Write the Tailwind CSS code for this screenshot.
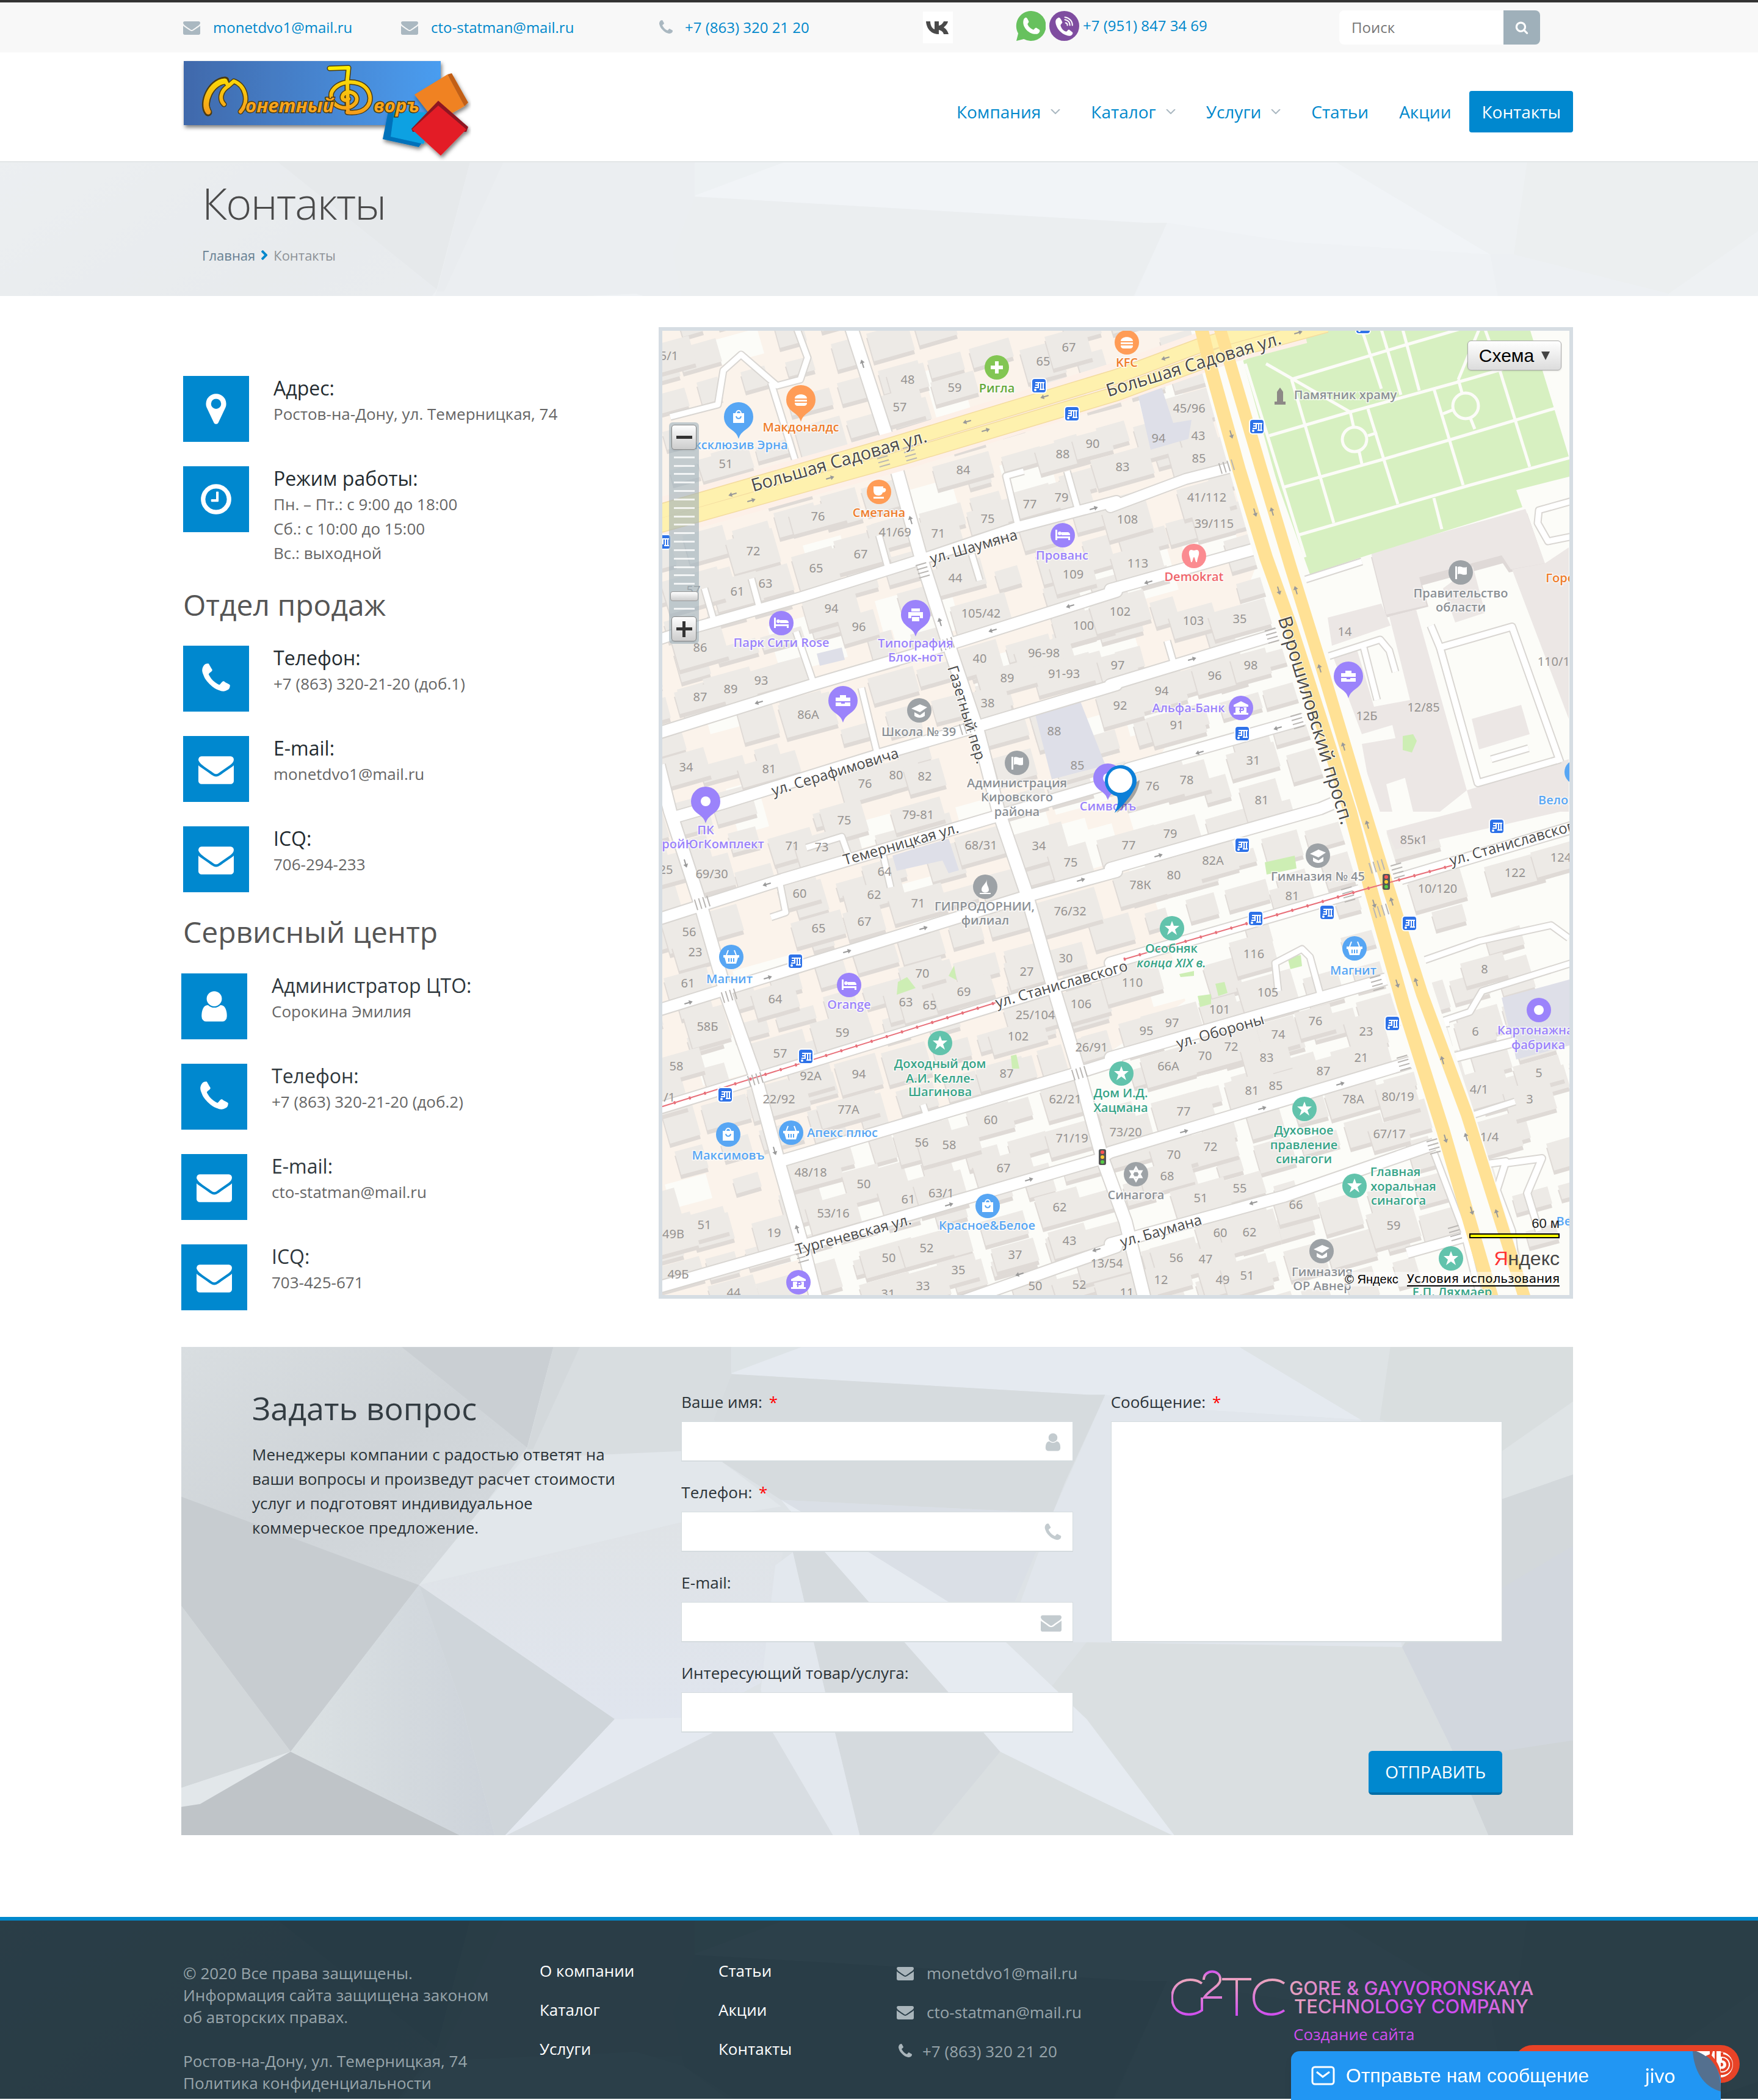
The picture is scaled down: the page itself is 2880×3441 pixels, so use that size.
<!DOCTYPE html>
<html lang="ru">
<head>
<meta charset="utf-8">
<meta name="viewport" content="width=device-width, initial-scale=1">
<title>Контакты — Монетный Дворъ</title>
<script src="https://cdn.jsdelivr.net/npm/@tailwindcss/browser@4"></script>
</head>
<body class="bg-white font-['Open_Sans',sans-serif] text-[26px] leading-[40px] text-[#666]">

<!-- shared icons and background facets -->
<svg class="absolute h-0 w-0" aria-hidden="true">
  <defs>
    <symbol id="i-mail" viewBox="0 0 1792 1792"><path d="M1792 710v794q0 66-47 113t-113 47H160q-66 0-113-47T0 1504V710q44 49 101 87 362 246 497 345 57 42 92.5 65.5t94.5 48 110 24.500h2q51 0 110-24.500t94.500-48T1194 1142q170-123 498-345 57-39 100-87zm0-294q0 79-49 151t-122 123q-376 261-468 325-10 7-42.500 31t-54 38.500-52 32.500-57.500 27-50 9h-2q-23 0-50-9t-57.500-27-52-32.500-54-38.500-42.500-31q-91-64-262-182.500T187 690q-62-42-117-115.500T0 438q0-78 41.500-130T160 256h1472q65 0 112.500 47t47.500 113z"/></symbol>
    <symbol id="i-phone" viewBox="0 0 1792 1792"><path d="M1600 1240q0 27-10 70.500t-21 68.500q-21 50-122 106-94 51-186 51-27 0-53-3.500t-57.500-12.500-47-14.500-55.500-20.500-49-18q-98-35-175-83-127-79-264-216t-216-264q-48-77-83-175-3-9-18-49t-20.500-55.500-14.500-47-12.500-57.500-3.500-53q0-92 51-186 56-101 106-122 25-11 68.500-21t70.500-10q14 0 21 3 18 6 53 76 11 19 30 54t35 63.500 31 53.500q3 4 17.500 25t21.500 35.500 7 28.500q0 20-28.500 50t-62 55-62 53-28.500 46q0 9 5 22.500t8.500 20.500 14 24 11.500 19q76 137 174 235t235 174q2 1 19 11.500t24 14 20.500 8.500 22.500 5q18 0 46-28.500t53-62 55-62 50-28.500q14 0 28.500 7t35.500 21.500 25 17.500q25 15 53.500 31t63.500 35 54 30q70 35 76 53 3 7 3 21z"/></symbol>
    <symbol id="i-user" viewBox="0 0 1792 1792"><path d="M1536 1399q0 109-62.500 187t-150.500 78H469q-88 0-150.500-78T256 1399q0-85 8.500-160.500t31.500-152 58.500-131 94-89T583 832q131 128 313 128t313-128q76 0 134.500 34.500t94 89 58.500 131 31.500 152 8.500 160.500zm-256-887q0 159-112.500 271.500T896 896 624.500 783.500 512 512t112.500-271.500T896 128t271.500 112.500T1280 512z"/></symbol>
    <symbol id="i-clock" viewBox="0 0 1792 1792"><path d="M1024 544v448q0 14-9 23t-23 9H672q-14 0-23-9t-9-23v-64q0-14 9-23t23-9h224V544q0-14 9-23t23-9h64q14 0 23 9t9 23zm416 352q0-148-73-273t-198-198-273-73-273 73-198 198-73 273 73 273 198 198 273 73 273-73 198-198 73-273zm224 0q0 209-103 385.500T1281.500 1561 896 1664t-385.500-103T231 1281.500 128 896t103-385.500T510.500 231 896 128t385.500 103T1561 510.500 1664 896z"/></symbol>
    <symbol id="i-marker" viewBox="0 0 1792 1792"><path d="M1152 640q0-106-75-181t-181-75-181 75-75 181 75 181 181 75 181-75 75-181zm256 0q0 109-33 179l-364 774q-16 33-47.500 52t-67.500 19-67.500-19-46.500-52L417 819q-33-70-33-179 0-212 150-362t362-150 362 150 150 362z"/></symbol>
    <symbol id="i-search" viewBox="0 0 1792 1792"><path d="M1216 832q0-185-131.500-316.500T768 384 451.500 515.500 320 832t131.500 316.500T768 1280t316.500-131.500T1216 832zm512 832q0 52-38 90t-90 38q-54 0-90-38l-343-342q-179 124-399 124-143 0-273.500-55.500t-225-150-150-225T64 832t55.500-273.500 150-225 225-150T768 128t273.500 55.500 225 150 150 225T1472 832q0 220-124 399l343 343q37 37 37 90z"/></symbol>
    <linearGradient id="f1" x1="0" y1="0" x2="1" y2="1"><stop offset="0" stop-color="#d9dee1"/><stop offset=".5" stop-color="#cfd4d8"/><stop offset="1" stop-color="#d6dbdf"/></linearGradient>
    <linearGradient id="f2" x1="0" y1="0" x2="1" y2="0"><stop offset="0" stop-color="#dbe1e3"/><stop offset="1" stop-color="#cdd3da"/></linearGradient>
    <linearGradient id="f3" x1="0" y1="0" x2="0" y2="1"><stop offset="0" stop-color="#dfe3e6"/><stop offset="1" stop-color="#e0e5ee"/></linearGradient>
    <g id="facets" transform="matrix(.9567 0 0 .5357 -17 -17)">
      <path fill="#dde2e6" d="M0 0h2450v1900H0z"/>
      <path fill="url(#f1)" d="M10 32H395L610 340 530 530 425 760 10 490z"/>
      <path fill="#c7ccd0" d="M10 485L425 760 205 1270 10 805z"/>
      <path fill="#d2d7da" d="M10 805L205 1270 10 1385z"/>
      <path fill="#e2e7ea" d="M10 1385L205 1270 50 1430 10 1441z"/>
      <path fill="#bfc4c8" d="M10 1441L50 1430 205 1270 500 1530H10z"/>
      <path fill="url(#f2)" d="M205 1270L425 760 500 1140 555 1530H500z"/>
      <path fill="#cfd5da" d="M425 760L760 1170 570 1530H555L500 1140z"/>
      <path fill="#cacfd3" d="M395 32H655L610 340z"/>
      <path fill="#d8dde0" d="M655 32H960V115L930 250 945 360 605 372 610 340z"/>
      <path fill="#d3d8db" d="M655 32H700L620 345H610z"/>
      <path fill="#e2e7eb" d="M605 372L880 350 945 385 1045 520 870 570 425 760 530 530z"/>
      <path fill="url(#f3)" d="M425 760L870 570 1060 530 1010 1060 900 1165 760 1170z"/>
      <path fill="#e5eaf0" d="M960 32H1830L2038 255 1770 225 1568 178 960 115z"/>
      <path fill="#dde3e6" d="M960 32H1080L960 112z"/>
      <path fill="#d6dbde" d="M960 115L1568 178H1600L1530 450 1510 540 1045 500 945 385 930 250z"/>
      <path fill="#dadfe6" d="M1045 500L1510 540 1445 810H1330z"/>
      <path fill="#e1e6ec" d="M1600 178L1770 225 2038 255 2108 950 1568 935 1430 935 1510 540z"/>
      <path fill="#dee3e5" d="M1830 32H2088L2070 255H2038z"/>
      <path fill="#d9dedf" d="M2088 32H2420V175L2280 350 2070 255z"/>
      <path fill="#dfe4e6" d="M2420 175V410L2275 500 2280 350z"/>
      <path fill="#d3d8db" d="M2420 410V640L2108 950 2275 500z"/>
      <path fill="#d2d7de" d="M2108 950L2420 620V1530H2257L2190 1250z"/>
      <path fill="#cfd4d7" d="M2200 1290L2420 1230V1530H2257z"/>
      <path fill="#dadfe1" d="M1568 935L2108 950 2190 1250 2257 1530H1300L1420 1270z"/>
      <path fill="#d5dade" d="M1060 530L1125 660 1330 1085 1420 1270 1300 1530H1180L1120 1085 1065 660z"/>
      <path fill="#e6ebf1" d="M1045 500L1195 660 1330 810 1430 935 1568 1170 1720 1530 1568 1400 1420 1270 1330 1085 1120 660z"/>
      <path fill="#e3e8ee" d="M1065 660L1035 700 1010 1080 1030 1210 1135 1530H1180L1120 1085z"/>
      <path fill="#e4e9f0" d="M760 1170L900 1165 930 1210 570 1530z"/>
      <path fill="#d8dde2" d="M930 1210H1030L1135 1530H570z"/>
    </g>
  </defs>
</svg>

<!-- contact strip -->
<div class="border-t-4 border-[#333] bg-[#f8f8f8] pr-[6px] text-[24px] leading-[36px]">
  <div class="mx-auto grid h-[82px] w-full max-w-[2280px] grid-cols-[357fr_420fr_435fr_152fr_530fr_329fr] items-center pl-[3px] pr-[54px] text-[#0088cc]">
    <a href="mailto:monetdvo1@mail.ru" class="flex items-center gap-[21px]"><svg class="size-7 fill-[#aab8c1]"><use href="#i-mail"/></svg>monetdvo1@mail.ru</a>
    <a href="mailto:cto-statman@mail.ru" class="flex items-center gap-[21px]"><svg class="size-7 fill-[#aab8c1]"><use href="#i-mail"/></svg>cto-statman@mail.ru</a>
    <a href="tel:+78633202120" class="flex items-center gap-[17px]"><svg class="size-7 fill-[#aab8c1]"><use href="#i-phone"/></svg>+7 (863) 320 21 20</a>
    <a href="#vk" aria-label="ВКонтакте" class="flex h-[52px] w-[49px] items-center justify-center bg-white">
      <svg class="h-[22px] w-[40px]" viewBox="0 0 40 22"><path fill="#4a4a4a" d="M21 22C9 22 1 14 0 1h7c0 8 4 12 7 13V1h7v7c3 0 7-4 8-7h7c-1 5-5 8-7 10 2 1 6 4 8 11h-8c-1-4-4-6-8-7v7z"/></svg>
    </a>
    <div class="flex items-center gap-[6px] pb-[6px]">
      <svg class="size-[49px] shrink-0" viewBox="0 0 48 48"><path fill="#67c15e" d="M24 0a24 24 0 1 1-11 45L1 48l3-12A24 24 0 0 1 24 0z"/><path fill="#fff" d="M15 11c2-1 3 0 4 2l2 4c0 2-2 3-2 4 1 4 5 7 9 9 2 0 3-4 5-3l5 3c2 2-1 7-5 7-10 1-21-9-21-19 0-3 1-6 3-7z"/></svg>
      <svg class="size-[49px] shrink-0" viewBox="0 0 48 48"><circle cx="24" cy="24" r="24" fill="#7f4da0"/><path fill="#fff" d="M14 11c2-1 3 0 5 3l2 4c0 2-3 3-3 5 1 5 5 9 9 10 2 0 3-4 5-3l5 4c2 2-1 6-5 6C20 39 10 27 10 17c0-3 2-5 4-6z"/><path fill="none" stroke="#fff" stroke-width="2" stroke-linecap="round" d="M25 10c7 1 12 6 12 13M25 14c5 1 8 4 8 9M26 19c2 0 3 1 3 4"/></svg>
      <a href="tel:+79518473469">+7 (951) 847 34 69</a>
    </div>
    <form class="flex h-14 overflow-hidden rounded-[8px]">
      <input type="search" aria-label="Поиск" placeholder="Поиск" class="min-w-0 flex-1 bg-white px-5 text-[#777] placeholder:text-[#777] outline-none">
      <button type="button" aria-label="Найти" class="flex w-[60px] items-center justify-center bg-[#9fb0ba]"><svg class="size-[22px] fill-white"><use href="#i-search"/></svg></button>
    </form>
  </div>
</div>

<!-- header -->
<header class="border-b-2 border-[#e2e6e7] bg-white pr-[6px]">
  <div class="mx-auto flex h-[178px] w-full max-w-[2280px] items-start justify-between">
    <a href="#home" aria-label="Монетный Дворъ" class="block pt-[12px]">
      <svg class="h-[166px] w-[475px]" viewBox="297 98 475 166">
        <defs>
          <linearGradient id="lg" x1="0" x2="1"><stop offset="0" stop-color="#4169ab"/><stop offset="1" stop-color="#4a9df0"/></linearGradient>
          <linearGradient id="gold" gradientUnits="userSpaceOnUse" x1="0" y1="108" x2="0" y2="188"><stop offset="0" stop-color="#fdf000"/><stop offset="1" stop-color="#f59b1c"/></linearGradient>
          <filter id="sh" x="-10%" y="-10%" width="130%" height="130%"><feDropShadow dx="2" dy="4" stdDeviation="3" flood-opacity=".5"/></filter>
        </defs>
        <path fill="url(#lg)" filter="url(#sh)" d="M301 100H722V205H301z"/>
        <g filter="url(#sh)">
          <path fill="#0271ba" d="M636 182l-9 46 59 13 34-46z"/><path fill="#0aa1e2" d="M646 180l-6 44 54 12 20-50z"/>
          <path fill="#f08220" d="M679 155l54-33 28 52-47 26z"/><path fill="#c25f14" d="M733 122l7-2 27 48-6 6z"/>
          <path fill="#8e1720" d="M718 165l49 43-3 8-88 0-2-5z"/><path fill="#e31e26" d="M718 173l46 39-42 43-47-43z"/>
        </g>
        <g fill="none" stroke-linecap="round" stroke-linejoin="round">
          <g stroke="#4b3b12"><path stroke-width="13" d="M341 184c-11-14 4-50 28-52"/><path stroke-width="9" d="M341 180c-8-16 6-46 28-48l5 9 9-8c18 6 27 32 11 50M374 141c-13 8-15 22-7 30M540 112l31-1-2 20M569 130v54M569 184c34 4 45-20 32-38-14-18-50-14-58 6-5 22 26 34 40 16 8-16-18-24-22-10-1 6 6 8 10 4"/></g>
          <g stroke="url(#gold)"><path stroke-width="9" d="M341 183c-10-14 4-48 27-50"/><path stroke-width="6" d="M341 180c-8-16 6-46 28-48l5 9 9-8c18 6 27 32 11 50M374 141c-13 8-15 22-7 30M540 112l31-1-2 20M569 130l1 54M569 184c34 4 45-20 32-38-14-18-50-14-58 6-5 22 26 34 40 16 8-16-18-24-22-10-1 6 6 8 10 4"/></g>
        </g>
        <g font-family="Open Sans, sans-serif" font-weight="700" font-size="31" font-style="italic" fill="#f8a51c" stroke="#4b3b12" stroke-width="3" paint-order="stroke">
          <text x="402" y="184">онетный</text><text x="612" y="184">воръ</text>
        </g>
      </svg>
    </a>
    <nav class="mt-[63px] flex items-center gap-[10px] text-[28px] leading-[68px] text-[#0088cc]">
      <a href="#company" class="flex items-center gap-4 px-5">Компания<svg class="h-2 w-4 fill-none stroke-[#aab8c1] stroke-2" viewBox="0 0 16 8"><path d="M1 0l7 7 7-7"/></svg></a>
      <a href="#catalog" class="flex items-center gap-4 px-5">Каталог<svg class="h-2 w-4 fill-none stroke-[#aab8c1] stroke-2" viewBox="0 0 16 8"><path d="M1 0l7 7 7-7"/></svg></a>
      <a href="#services" class="flex items-center gap-4 px-5">Услуги<svg class="h-2 w-4 fill-none stroke-[#aab8c1] stroke-2" viewBox="0 0 16 8"><path d="M1 0l7 7 7-7"/></svg></a>
      <a href="#articles" class="px-5">Статьи</a>
      <a href="#offers" class="px-5">Акции</a>
      <a href="#contacts" aria-current="page" class="rounded-[4px] bg-[#0088cf] px-5 text-white">Контакты</a>
    </nav>
  </div>
</header>

<!-- page title -->
<section class="relative bg-[#e9edef] pr-[6px]">
  <svg class="absolute inset-0 size-full" viewBox="0 0 2280 800" preserveAspectRatio="xMinYMin slice" aria-hidden="true"><use href="#facets"/></svg>
  <div class="absolute inset-0 bg-[#f8fafb]/60"></div>
  <div class="relative mx-auto h-[219px] w-full max-w-[2280px] px-[34px] pt-4">
    <h1 class="text-[72px] leading-[100px] font-light tracking-tight text-[#4a4a4a]">Контакты</h1>
    <nav aria-label="Навигация" class="mt-5 flex items-center gap-[10px] text-[22px] leading-8">
      <a href="#home" class="text-[#667f92]">Главная</a>
      <svg class="h-4 w-[10px] fill-none stroke-[#0088cc] stroke-4" viewBox="0 0 10 16"><path d="M1 1l7 7-7 7"/></svg>
      <span class="text-[#8d9297]">Контакты</span>
    </nav>
  </div>
</section>

<main id="contacts" class="pr-[6px]">
  <div class="mx-auto w-full max-w-[2280px]">
    <div class="flex items-start pt-[51px]">
      <!-- contact details -->
      <div class="w-[782px] shrink-0 pt-20">
        <div class="flex flex-col gap-10 pl-[3px]">
          <div class="flex gap-10"><span class="flex size-[108px] shrink-0 items-center justify-center bg-[#0088cf]"><svg class="size-[58px] fill-white"><use href="#i-marker"/></svg></span><div><h4 class="mb-[2px] text-[32px] text-[#232b30]">Адрес:</h4><p>Ростов-на-Дону, ул. Темерницкая, 74</p></div></div>
          <div class="flex gap-10"><span class="flex size-[108px] shrink-0 items-center justify-center bg-[#0088cf]"><svg class="size-[58px] fill-white"><use href="#i-clock"/></svg></span><div><h4 class="mb-[2px] text-[32px] text-[#232b30]">Режим работы:</h4><p>Пн. – Пт.: с 9:00 до 18:00<br>Сб.: с 10:00 до 15:00<br>Вс.: выходной</p></div></div>
        </div>
        <h3 class="mt-[33px] mb-[35px] pl-[3px] text-[48px] leading-[64px] text-[#555]">Отдел продаж</h3>
        <div class="flex flex-col gap-10 pl-[3px]">
          <div class="flex gap-10"><span class="flex size-[108px] shrink-0 items-center justify-center bg-[#0088cf]"><svg class="size-[58px] fill-white"><use href="#i-phone"/></svg></span><div><h4 class="mb-[2px] text-[32px] text-[#232b30]">Телефон:</h4><p>+7 (863) 320-21-20 (доб.1)</p></div></div>
          <div class="flex gap-10"><span class="flex size-[108px] shrink-0 items-center justify-center bg-[#0088cf]"><svg class="size-[58px] fill-white"><use href="#i-mail"/></svg></span><div><h4 class="mb-[2px] text-[32px] text-[#232b30]">E-mail:</h4><p>monetdvo1@mail.ru</p></div></div>
          <div class="flex gap-10"><span class="flex size-[108px] shrink-0 items-center justify-center bg-[#0088cf]"><svg class="size-[58px] fill-white"><use href="#i-mail"/></svg></span><div><h4 class="mb-[2px] text-[32px] text-[#232b30]">ICQ:</h4><p>706-294-233</p></div></div>
        </div>
        <h3 class="mt-[33px] mb-[36px] pl-[3px] text-[48px] leading-[64px] text-[#555]">Сервисный центр</h3>
        <div class="flex flex-col gap-10">
          <div class="flex gap-10"><span class="flex size-[108px] shrink-0 items-center justify-center bg-[#0088cf]"><svg class="size-[58px] fill-white"><use href="#i-user"/></svg></span><div><h4 class="mb-[2px] text-[32px] text-[#2f383d]">Администратор ЦТО:</h4><p>Сорокина Эмилия</p></div></div>
          <div class="flex gap-10"><span class="flex size-[108px] shrink-0 items-center justify-center bg-[#0088cf]"><svg class="size-[58px] fill-white"><use href="#i-phone"/></svg></span><div><h4 class="mb-[2px] text-[32px] text-[#2f383d]">Телефон:</h4><p>+7 (863) 320-21-20 (доб.2)</p></div></div>
          <div class="flex gap-10"><span class="flex size-[108px] shrink-0 items-center justify-center bg-[#0088cf]"><svg class="size-[58px] fill-white"><use href="#i-mail"/></svg></span><div><h4 class="mb-[2px] text-[32px] text-[#2f383d]">E-mail:</h4><p>cto-statman@mail.ru</p></div></div>
          <div class="flex gap-10"><span class="flex size-[108px] shrink-0 items-center justify-center bg-[#0088cf]"><svg class="size-[58px] fill-white"><use href="#i-mail"/></svg></span><div><h4 class="mb-[2px] text-[32px] text-[#2f383d]">ICQ:</h4><p>703-425-671</p></div></div>
        </div>
      </div>

      <!-- map -->
      <div class="relative h-[1592px] min-w-0 flex-1 overflow-hidden border-[6px] border-[#d6dde3] bg-[#fbf9f5]">
        <svg id="map" class="size-full" viewBox="1086 542 1486 1580" preserveAspectRatio="xMinYMin slice" role="img" aria-label="Карта проезда"></svg>

        <div class="absolute top-[150px] left-[11px] flex h-[363px] w-[49px] flex-col items-center justify-between rounded-[6px] bg-[#9fb0ba]/60 p-1">
          <button type="button" aria-label="Отдалить" class="flex size-[41px] items-center justify-center rounded-[5px] border border-[#8a8a8a] bg-linear-to-b from-white to-[#ccc] shadow"><span class="h-[5px] w-[26px] bg-[#333]"></span></button>
          <div class="relative flex flex-1 flex-col items-center justify-evenly">
            <i class="h-[3px] w-[34px] bg-white/80"></i><i class="h-[3px] w-[34px] bg-white/80"></i><i class="h-[3px] w-[34px] bg-white/80"></i><i class="h-[3px] w-[34px] bg-white/80"></i><i class="h-[3px] w-[34px] bg-white/80"></i><i class="h-[3px] w-[34px] bg-white/80"></i><i class="h-[3px] w-[34px] bg-white/80"></i><i class="h-[3px] w-[34px] bg-white/80"></i><i class="h-[3px] w-[34px] bg-white/80"></i><i class="h-[3px] w-[34px] bg-white/80"></i><i class="h-[3px] w-[34px] bg-white/80"></i><i class="h-[3px] w-[34px] bg-white/80"></i><i class="h-[3px] w-[34px] bg-white/80"></i><i class="h-[3px] w-[34px] bg-white/80"></i><i class="h-[3px] w-[34px] bg-white/80"></i><i class="h-[3px] w-[34px] bg-white/80"></i>
            <i class="h-[16px] w-[46px] rounded-[4px] border border-[#999] bg-linear-to-b from-white to-[#ccc]"></i>
            <i class="h-[3px] w-[34px] bg-white/80"></i>
            <input type="range" aria-label="Масштаб" min="0" max="17" value="16" class="absolute inset-0 size-full opacity-0">
          </div>
          <button type="button" aria-label="Приблизить" class="relative flex size-[41px] items-center justify-center rounded-[5px] border border-[#8a8a8a] bg-linear-to-b from-white to-[#ccc] shadow"><span class="h-[5px] w-[26px] bg-[#333]"></span><span class="absolute h-[26px] w-[5px] bg-[#333]"></span></button>
        </div>

        <button type="button" class="absolute top-[16px] right-[13px] flex h-[49px] w-[154px] items-center justify-center gap-3 rounded-[6px] border border-[#aaa] bg-linear-to-b from-white to-[#dcdcdc] font-['Liberation_Sans',sans-serif] text-[30px] leading-none text-black shadow">Схема<svg class="size-[14px] fill-[#444]" viewBox="0 0 14 14"><path d="M0 0h14L7 14z"/></svg></button>

        <div class="absolute right-[16px] bottom-[14px] flex flex-col items-end font-['Liberation_Sans',sans-serif] text-[20px] leading-6 text-black">
          <span class="text-[22px] text-[#222]">60 м</span>
          <span class="mt-[4px] h-[8px] w-[148px] border-2 border-black bg-[#ffff00]"></span>
          <span class="mt-[15px] text-[32px] leading-[36px] text-[#444]"><span class="text-[#f33]">Я</span>ндекс</span>
          <span class="mt-[4px] flex gap-[14px] bg-white/50"><span>© Яндекс</span><a href="#terms" class="border-b-2 border-black font-['DejaVu_Sans',sans-serif] text-[20px] leading-[22px]">Условия использования</a></span>
        </div>
      </div>
    </div>

    <!-- question form -->
    <section class="relative mt-[60px] bg-[#dde2e6] text-[#2b3338]">
      <svg class="absolute inset-0 size-full" viewBox="0 0 2280 800" preserveAspectRatio="xMinYMin slice" aria-hidden="true"><use href="#facets"/></svg>
      <form class="relative grid grid-cols-3 gap-x-[62px] px-[116px] pt-[70px] pb-[66px]">
        <div>
          <h2 class="-mt-[2px] text-[52px] leading-[64px] text-[#333c42]">Задать вопрос</h2>
          <p class="mt-6 max-w-[600px]">Менеджеры компании с радостью ответят на ваши вопросы и произведут расчет стоимости услуг и подготовят индивидуальное коммерческое предложение.</p>
        </div>
        <div class="flex flex-col gap-[30px]">
          <div class="relative">
            <label for="name" class="mb-3 block">Ваше имя: <span class="ml-1 text-[#f00]">*</span></label>
            <input id="name" type="text" class="block h-[66px] w-full border border-b-2 border-[#d5dcdf] bg-white pr-16 pl-4 outline-none">
            <svg class="absolute right-4 bottom-[15px] size-[34px] fill-[#c3cbcf]"><use href="#i-user"/></svg>
          </div>
          <div class="relative">
            <label for="tel" class="mb-3 block">Телефон: <span class="ml-1 text-[#f00]">*</span></label>
            <input id="tel" type="tel" class="block h-[66px] w-full border border-b-2 border-[#d5dcdf] bg-white pr-16 pl-4 outline-none">
            <svg class="absolute right-4 bottom-[15px] size-[34px] fill-[#c3cbcf]"><use href="#i-phone"/></svg>
          </div>
          <div class="relative">
            <label for="email" class="mb-3 block">E-mail:</label>
            <input id="email" type="email" class="block h-[66px] w-full border border-b-2 border-[#d5dcdf] bg-white pr-16 pl-4 outline-none">
            <svg class="absolute right-[19px] bottom-[15px] size-[34px] fill-[#c3cbcf]"><use href="#i-mail"/></svg>
          </div>
          <div>
            <label for="item" class="mb-3 block">Интересующий товар/услуга:</label>
            <input id="item" type="text" class="block h-[66px] w-full border border-b-2 border-[#d5dcdf] bg-white px-4 outline-none">
          </div>
        </div>
        <div class="flex flex-col">
          <label for="msg" class="mb-3 block">Сообщение: <span class="ml-1 text-[#f00]">*</span></label>
          <textarea id="msg" class="block h-[362px] w-full resize-none border border-b-2 border-[#d5dcdf] bg-white p-4 outline-none"></textarea>
        </div>
        <button type="submit" class="col-start-3 mt-[30px] h-[72px] justify-self-end rounded-[6px] border-b-4 border-[#006da6] bg-[#0088cf] px-[27px] text-[28px] text-white">ОТПРАВИТЬ</button>
      </form>
    </section>
  </div>
</main>

<footer class="relative mt-[134px] border-t-6 border-[#0088cc] bg-[#263a44] pr-[6px] text-[#98a5ab]">
  <svg class="absolute inset-0 size-full" viewBox="0 0 2280 800" preserveAspectRatio="xMinYMin slice" aria-hidden="true"><use href="#facets"/></svg>
  <div class="absolute inset-0 bg-[#061d28]/83"></div>
  <div class="relative mx-auto grid w-full max-w-[2280px] grid-cols-[584fr_293fr_292fr_450fr_658fr] pt-[68px] pb-2 pl-[3px]">
    <p class="leading-9">© 2020 Все права защищены.<br>Информация сайта защищена законом<br>об авторских правах.<br><br>Ростов-на-Дону, ул. Темерницкая, 74<br><a href="#privacy">Политика конфиденциальности</a></p>
    <nav class="-mt-[6px] flex flex-col gap-6 text-white"><a href="#about">О компании</a><a href="#catalog">Каталог</a><a href="#services">Услуги</a></nav>
    <nav class="-mt-[6px] flex flex-col gap-6 text-white"><a href="#articles">Статьи</a><a href="#offers">Акции</a><a href="#contacts">Контакты</a></nav>
    <div class="-mt-[2px] flex flex-col gap-6">
      <a href="mailto:monetdvo1@mail.ru" class="flex items-center gap-[21px]"><svg class="size-7 fill-[#a9b5bb]"><use href="#i-mail"/></svg>monetdvo1@mail.ru</a>
      <a href="mailto:cto-statman@mail.ru" class="flex items-center gap-[21px]"><svg class="size-7 fill-[#a9b5bb]"><use href="#i-mail"/></svg>cto-statman@mail.ru</a>
      <a href="tel:+78633202120" class="flex items-center gap-[14px]"><svg class="size-7 fill-[#a9b5bb]"><use href="#i-phone"/></svg>+7 (863) 320 21 20</a>
    </div>
    <a href="#studio" class="block pt-3 text-[#cf4df0]">
      <svg class="h-[80px] w-[610px]" viewBox="1920 3226 610 80">
        <defs>
          <linearGradient id="pk" x1="0" x2="1"><stop offset="0" stop-color="#e6a3bd"/><stop offset=".45" stop-color="#cf4df0"/><stop offset=".75" stop-color="#cf4df0"/><stop offset="1" stop-color="#dc86cf"/></linearGradient>
          <linearGradient id="pv" gradientUnits="userSpaceOnUse" x1="0" y1="3228" x2="0" y2="3302"><stop offset="0" stop-color="#cf4df0"/><stop offset=".2" stop-color="#eba5bd"/><stop offset="1" stop-color="#cf4df0"/></linearGradient>
        </defs>
        <g fill="none" stroke="url(#pv)" stroke-width="4"><path d="M1970 3249c-17-13-49-5-49 23 0 29 31 34 49 21v-21"/><path d="M1973 3243c0-18 28-18 27 0 0 10-20 18-26 29h29M2003 3242h48M2027 3242v60M2105 3249c-18-13-50-5-50 23 0 29 32 34 50 21"/></g>
        <g font-family="Inter, sans-serif" font-size="31" font-weight="500" fill="url(#pk)"><text x="2113" y="3268">GORE &amp; GAYVORONSKAYA</text><text x="2121" y="3298">TECHNOLOGY COMPANY</text></g>
      </svg>
      <span class="block pt-[6px] pl-[200px]">Создание сайта</span>
    </a>
  </div>
</footer>

<!-- chat and callback widgets -->
<div class="fixed right-[30px] bottom-[28px] h-[62px] w-[370px] rounded-full bg-[#e84327]">
  <svg class="absolute top-[10px] right-[10px] size-[44px]" viewBox="0 0 44 44"><circle cx="22" cy="22" r="21" fill="#fff"/><path fill="none" stroke="#e84327" stroke-width="4" d="M16 2v20a9 9 0 1 0 9-9M25 2v5a15 15 0 1 1-13 22"/><circle cx="24" cy="22" r="3" fill="#e84327"/></svg>
</div>
<button type="button" class="fixed right-[61px] bottom-0 flex h-[80px] w-[704px] items-center overflow-hidden rounded-tl-[14px] bg-[#2196f3] px-[33px] text-left font-['Liberation_Sans',sans-serif] text-[32px] leading-[40px] text-white shadow-lg">
  <svg class="h-[32px] w-[39px] shrink-0 fill-none stroke-white stroke-3" viewBox="0 0 39 32"><rect x="2" y="2" width="35" height="28" rx="4"/><path d="M9 10l10 8 11-8"/></svg>
  <span class="ml-[18px]">Отправьте нам сообщение</span>
  <span class="absolute top-[20px] left-[580px] font-['Lato',sans-serif] text-[32px]">jivo</span>
  <svg class="absolute top-0 right-0 h-[68px] w-[46px]" viewBox="0 0 46 68"><path fill="#54708f" d="M0 0h8c26 8 38 30 38 66C16 58 2 30 0 0z"/><path fill="#e84327" d="M8 0h38v46C40 22 28 8 8 0z"/><path fill="#fff" d="M6 0h22v5l-7 3C17 5 12 2 6 0zM33 0h3v13l-5-6zM39 0h7v36c-1-8-4-14-7-19z"/></svg>
</button>

<script>
// The map is surveyed on four sheets; each has its own origin and scale.
const sheets = {A: [1070, 530, .48469, .5102], B: [1820, 530, .49107, .5102], C: [1070, 1330, .48469, .51658], D: [1820, 1330, .49107, .51658]};
const at = (s, u, v) => { const [x, y, a, b] = sheets[s]; return [Math.round(x + u * a), Math.round(y + v * b)]; };
// "A 30 650 120 600 B 0 150" -> list of points
const pts = str => { let s = 'A', out = [], q = []; for (const t of str.split(' ')) { if (sheets[t]) s = t; else { q.push(+t); if (q.length === 2) { out.push(at(s, ...q)); q = []; } } } return out; };
const line = str => 'M' + pts(str).map(p => p.join(' ')).join('L');
let seed = 7; const rnd = () => (seed = (seed * 16807) % 2147483647) / 2147483647;
let out = '';

// ground
out += '<path fill="#fcfcf8" d="M1080 536H2580V2130H1080z"/>';
out += `<path fill="#fbf3eb" d="${line('A 30 20 B 300 0 500 740 B 400 1000 60 1568 D 250 600 0 760 C 1400 840 430 1100 560 1568 C 20 1568')}z"/>`;
for (let i = 0; i < 46; i++) { const x = 1090 + rnd() * 850, y = 560 + rnd() * 1500, w = 50 + rnd() * 60, h = 30 + rnd() * 50; out += `<path fill="#fcfcf8" d="M${x | 0} ${y | 0}l${w | 0} ${-w * .28 | 0} ${h * .29 | 0} ${h | 0} ${-w | 0} ${w * .28 | 0}z"/>`; }

// buildings
const box = (x, y, w, h) => { const p = (a, b, o) => `${Math.round(x + a * .963 + b * .28)} ${Math.round(y - a * .27 + b * .96 + o)}`;
  const f = o => `M${p(-w / 2, -h / 2, o)}L${p(w / 2, -h / 2, o)}L${p(w / 2, h / 2, o)}L${p(-w / 2, h / 2, o)}z`;
  return `<path fill="#dfdad6" d="${f(7)}"/><path fill="#edeae6" d="${f(0)}"/>`; };
const avenue = y => 1975 + (y - 541) * .29 + (y > 1400 ? (y - 1400) * .04 : 0);
for (let j = -2; j < 30; j++) for (let i = -6; i < 24; i++) {
  const x = 1090 + i * 74 + j * 17, y = 660 + j * 58 - i * 20, w = 34 + rnd() * 44, h = 22 + rnd() * 34, k = rnd();
  if (x > avenue(y) - 20 && y < 1500) continue;
  if (k < .78) out += box(x, y, w, h);
}

const houses = {
A: '51 248 450 48 863 180 59 1021 206 57 836 268 65 1321 122 67 1407 76 5/1 55 103 76 559 619 84 1050 470 88 1387 419 90 1487 387 79 1383 558 77 1276 580 75 1133 628 71 965 674 41/69 820 670 67 704 740 72 340 731 65 552 786 63 381 834 61 287 860 57 139 857 109 1422 806 44 1024 817 105/42 1111 931 100 1456 970 94 605 915 96 697 974 86 160 1040 93 367 1147 89 265 1175 87 160 1200 86А 526 1256 40 1106 1077 96-98 1322 1059 91-93 1390 1126 89 1199 1138 38 1133 1220 88 1357 1310 85 1437 1420 81 395 1430 34 113 1424 80 824 1451 82 921 1454 76 719 1478',
B: '45/96 262 273 94 160 368 43 293 360 85 296 433 83 40 460 41/112 322 558 39/115 346 642 108 58 629 113 92 770 102 33 925 103 276 955 35 432 949 97 25 1098 96 349 1131 98 469 1097 94 172 1180 92 33 1227 91 221 1290 31 476 1403 78 255 1467 76 140 1485 81 505 1530 14 782 989 12Б 855 1261 12/85 1044 1232 110/15 1490 1086',
C: '75 648 27 79-81 898 10 71 473 108 73 572 113 25 45 184 69/30 201 197 68/31 1111 106 34 1306 108 75 1413 161 64 785 189 60 498 260 62 749 263 71 898 290 67 715 349 65 561 369 56 123 382 23 144 445 61 120 544 64 415 594 70 911 513 63 857 604 65 937 613 69 1053 572 27 1265 508 30 1396 465 76/32 1412 316 106 1449 610 25/104 1293 645 102 1235 712 26/91 1484 748 58Б 185 681 58 80 808 57 431 766 59 641 700 92А 534 838 94 697 832 87 1196 831 1/1 45 905 22/92 428 911 77А 662 944 60 1142 977 62/21 1395 912 56 910 1050 58 1003 1056 71/19 1418 1035 48/18 535 1145 50 714 1180 67 1186 1130 61 865 1230 63/1 975 1210 53/16 611 1273 51 176 1310 49В 70 1339 19 410 1336 62 1377 1254 50 798 1415 52 926 1384 43 1410 1360 37 1225 1405 35 1033 1454 33 915 1505 50 1294 1505 52 1442 1500 13/54 1535 1433 49Б 87 1467 44 275 1525 31 797 1530',
D: '79 200 70 77 62 106 82А 342 155 80 211 202 78К 100 233 81 606 268 85к1 1013 90 122 1350 194 124 1503 145 10/120 1092 244 116 478 451 110 73 542 105 525 573 101 364 627 97 205 669 95 121 695 76 685 664 74 559 707 72 404 745 70 315 774 66А 193 807 23 854 697 21 836 781 83 521 780 87 711 822 85 552 869 81 472 884 78А 811 912 80/19 959 904 77 245 950 73/20 50 1016 67/17 931 1023 72 334 1062 70 212 1088 68 190 1156 8 1248 500 6 1217 696 5 1430 828 4/1 1230 880 3 1398 911 1/4 1264 1031 55 432 1194 51 302 1226 66 619 1246 59 944 1312 60 366 1335 62 464 1333 56 219 1415 47 318 1418 12 170 1484 49 374 1484 51 457 1471 11 55 1525'
};
const numbers = [];
for (const s in houses) { const t = houses[s].split(' '); for (let i = 0; i < t.length; i += 3) numbers.push([t[i], ...at(s, +t[i + 1], +t[i + 2])]); }
for (const [, x, y] of numbers) if (!(x > avenue(y) && y < 1330)) out += box(x, y, 60 + rnd() * 40, 36 + rnd() * 22);

// large blocks
const area = (fill, str) => `<path fill="${fill}" d="${line(str)}z"/>`;
out += area('#dedfe8', 'A 1290 1240 1440 1200 1530 1420 1350 1465') + area('#dedfe8', 'B 90 220 170 200 210 320 270 310 260 370 135 405') + area('#dedfe8', 'C 810 140 1000 85 1035 185 1000 195 980 155 825 188') + area('#dedfe8', 'D 1305 590 1540 530 1540 740 1355 785') + area('#dedfe8', 'A 555 1060 640 1040 650 1080 565 1100');
out += area('#dfd9d7', 'B 870 750 1390 610 1450 775 1330 800 1310 770 1040 840 1060 910 920 945') + area('#ece7e5', 'B 870 735 1385 595 1450 770 1335 790 1305 745 1030 815 1055 905 920 935');
out += area('#ece7e5', 'B 725 945 905 900 935 970 740 1035') + area('#ece7e5', 'B 930 940 1020 920 1190 1500 1100 1568 1010 1568 940 1290 840 1320 740 1060 820 1040 880 1230 1000 1210') + area('#ece7e5', 'B 1340 790 1450 770 1530 720 1530 1270') + area('#ece7e5', 'B 1205 1270 1370 1225 1398 1320 1230 1368') + area('#ece7e5', 'B 1110 850 1210 780 1250 930 1150 960') + area('#ece7e5', 'B 840 1350 960 1330 1010 1450 920 1480 940 1568 880 1568') + area('#ece7e5', 'B 1190 1500 1530 1400 1530 1568 1210 1568') + area('#ece7e5', 'D 920 60 1400 -60 1480 -50 1500 0 950 120');

// parks
out += area('#d7f0c1', 'B 415 130 700 20 1405 5 1540 430 1540 490 1355 535 1375 590 870 740 665 805');
for (const g of ['B 975 1325 1010 1320 1022 1340 1005 1378 975 1370', 'D 515 160 615 140 622 180 522 200', 'D 590 460 635 455 640 490 600 500', 'D 350 545 380 540 392 575 360 585', 'D 292 585 335 578 335 610 300 620', 'D 230 515 280 505 278 520 235 525', 'C 830 540 860 525 890 560 825 580', 'C 1000 520 1020 488 1028 535', 'C 1212 775 1230 770 1240 815 1215 815']) out += area('#cdeeb4', g);
const paths = ['B 450 130 650 750', 'B 520 130 800 285 840 450', 'B 600 180 980 70 1230 0', 'B 605 180 745 640', 'B 860 275 960 580', 'B 1080 210 1178 520', 'B 1300 150 1400 460', 'B 840 20 905 210', 'B 905 20 970 230', 'B 975 20 1030 215', 'B 530 360 800 285 1190 180 1440 110', 'B 580 525 900 440 1130 375 1490 270', 'B 625 680 1200 520 1540 430', 'B 1160 180 1230 20', 'B 1160 180 1175 230', 'B 1200 300 1215 340', 'B 860 360 890 350', 'B 1110 290 1150 275', 'B 1080 560 1105 660', 'B 1250 20 1300 150', 'B 1405 20 1535 430'];
out += `<g fill="none" stroke="#fcfcf8" stroke-width="5">${paths.map(p => `<path d="${line(p)}"/>`).join('')}<circle cx="2220" cy="720" r="20" fill="#d7f0c1"/><circle cx="2402" cy="665" r="21" fill="#d7f0c1"/></g>`;

// roads: [width, points]
const roads = [
[16, 'A 20 1015 150 975 500 880 900 760 1230 655 1568 570 B 0 590 250 500 410 460'], [18, 'A 20 1315 540 1160 1000 1030 1568 860 B 0 855 500 720'],
[18, 'A 60 1590 240 1540 750 1390 1080 1300 1568 1160 B 0 1160 640 975'], [18, 'C 20 340 440 215 1180 10 A 1568 1470 B 60 1430 670 1265'],
[18, 'C 20 630 1260 270 1568 190 D 0 180 700 -10 B 820 1510'], [18, 'C 20 940 1350 560 1568 500 D 0 480 850 245 1540 50'],
[18, 'C 430 1110 1450 825 1568 790 D 0 780 920 530'], [14, 'D 1100 670 1130 665'], [18, 'C 20 1508 480 1385 1500 1105 D 0 1080 1000 795'],
[14, 'D 1120 785 1350 730'], [18, 'C 1000 1568 1568 1380 D 0 1370 580 1220 1080 1055'], [16, 'D 990 1400 1180 1350'], [20, 'A 670 10 810 420 910 760 1010 1060 1100 1310 1170 1568 C 1260 250 1350 540 1440 820 1520 1100 D 50 1300 120 1568'],
[20, 'A 20 1420 60 1568 C 60 0 160 290 250 580 350 850 430 1120 520 1420 560 1568'], [9, 'A 490 20 525 110 500 180 420 200 300 100 240 150 220 260 60 300'], [9, 'A 400 190 490 460'], [9, 'A 1255 475 1195 490 1235 650'],
[9, 'A 1400 475 1440 605'], [9, 'A 765 680 795 780'], [9, 'A 335 820 360 905'], [9, 'A 175 850 205 945'], [9, 'A 485 990 540 1145'], [9, 'A 705 1170 760 1380'], [9, 'A 1080 740 1105 825'], [9, 'C 430 220 450 320 400 335'], [9, 'C 520 115 640 80 670 160'], [9, 'C 780 140 805 240'], [9, 'C 915 930 930 975'],
[10, 'B 1070 970 1100 1040 1340 975 1500 1410'], [10, 'B 1100 1040 1225 1475 1500 1400'], [9, 'B 710 1075 900 1015 930 1050 950 1120'], [9, 'B 845 1040 890 1210'], [9, 'B 1540 570 1430 600 1425 640 1460 700 1540 685'], [9, 'B 630 830 840 765'], [9, 'B 190 1020 210 1085'], [9, 'B 1270 1400 1395 1365'], [9, 'D 560 570 550 480 640 435 665 460 700 580'], [9, 'D 1090 670 1200 635 1240 570 1540 480'], [9, 'D 1020 480 1230 410 1470 360 1530 400'], [9, 'D 1185 970 1350 920'], [10, 'D 1230 1120 1320 1110 1290 1200 1340 1330 1360 1520'], [10, 'D 1320 1115 1440 1100 1390 1210 1430 1330'], [9, 'D 1080 1080 1180 1330 1240 1568']];
for (const [w, c] of [[4, '#d9d6d2'], [0, '#ffffff']]) out += `<g fill="none" stroke="${c}" stroke-linejoin="round">${roads.map(([r, p]) => `<path stroke-width="${r + w}" d="${line(p)}"/>`).join('')}</g>`;
const big = (c, w, p) => `<path fill="none" stroke="${c}" stroke-width="${w}" stroke-linejoin="round" d="${line(p)}"/>`;
out += big('#fcfcf8', 70, 'B 335 0 380 160 470 470 560 770 710 1240 825 1568 D 900 230 1010 580 1145 970 1340 1568');
out += big('#fdf0e8', 66, 'A 10 630 830 410 1568 190 B 400 60 640 0');
out += big('#f4dca0', 25, 'A 10 607 810 388 1568 170 B 300 70 560 0') + big('#f4dca0', 25, 'A 10 652 850 430 1568 225 B 400 90 720 5');
out += big('#fef1ae', 22, 'A 10 607 810 388 1568 170 B 300 70 560 0') + big('#fef1ae', 22, 'A 10 652 850 430 1568 225 B 400 90 720 5');
out += big('#ffe195', 22, 'B 300 0 340 160 430 470 520 750 600 970 D 800 0 870 250 980 620 1110 1010 1280 1568') + big('#ffe195', 20, 'B 360 0 410 160 500 460 600 780 700 1090 D 850 0 920 220 1040 580 1190 960 1390 1568');
out += '<g fill="none" stroke="#e8707a" stroke-width="2">' + ['C 20 938 1160 605', 'D 45 468 850 245 1140 170'].map(p => `<path d="${line(p)}"/><path stroke-width="5" stroke-dasharray="3 23" d="${line(p)}"/>`).join('') + '</g>';

// one-way arrows
for (const [s, u, v, r] of [['A',270,549,164],['A',335,569,-16],['A',600,495,-16],['A',1062,315,164],['A',1127,343,-16],['A',1325,236,164],['A',358,1217,164],['A',1150,985,164],['A',1412,908,164],['A',1492,594,-16],['A',710,130,-107],['A',872,632,-107],['A',972,958,-107],['B',403,357,73],['B',483,608,73],['B',563,858,73],['B',540,604,-107],['B',620,856,-107],['B',698,1108,-107],['B',777,1358,-107],['B',127,832,164],['B',272,1078,-16],['B',558,1300,164],['B',297,1378,164],['B',183,112,164],['B',627,30,-16],['C',386,231,164],['C',390,527,-16],['C',122,605,-16],['C',658,444,-16],['C',916,370,-16],['C',1448,216,-16],['C',112,165,73],['C',412,1076,73],['C',488,1325,-107],['C',1272,1168,-16],['C',1002,1247,-16],['C',1500,1390,164],['C',1240,1468,164],['D',857,40,-107],['D',880,292,73],['D',938,285,-107],['D',957,545,73],['D',1021,540,-107],['D',1107,787,-107],['D',1117,1038,73],['D',1188,1032,-107],['D',1206,1266,73],['D',1290,1273,-107],['D',160,140,-16],['D',768,864,-16],['D',507,940,-16],['D',247,1015,-16],['D',477,1241,164]]) {
  const [x, y] = at(s, u, v); out += `<path transform="translate(${x} ${y}) rotate(${r})" fill="#999" d="M-7 -1H1V-4L7 0 1 4V1H-7z"/>`; }
// crossings
for (const [s, u, v, r] of [['A',780,440,-16],['A',870,420,-16],['A',915,795,-16],['A',990,1030,73],['A',1060,1300,73],['B',385,460,73],['B',540,1005,-16],['B',625,1280,-16],['C',165,290,73],['C',255,585,73],['C',345,850,73],['C',505,1410,-16],['C',1440,830,73],['D',885,175,73],['D',900,315,73],['D',795,265,-16],['D',960,190,-16],['D',890,545,-16],['D',980,800,-16],['D',1080,1065,-16],['D',1150,1340,-16]]) { const [x, y] = at(s, u, v); out += `<path transform="translate(${x} ${y}) rotate(${r})" stroke="#b9b6b3" stroke-width="2" d="M-9 -12H9M-9 -5H9M-9 2H9M-9 9H9"/>`; }

// house numbers
out += '<g fill="#969391" font-family="Noto Sans, sans-serif" font-size="20" text-anchor="middle">' + numbers.map(([t, x, y]) => `<text x="${x}" y="${y + 7}">${t}</text>`).join('') + '</g>';

// places: [sheet, u, v, colour, icon, pin?]
const icon = {
bag: '<path d="M-9 -6H9V10H-9z"/><path fill="none" stroke="#fff" stroke-width="2" d="M-4 -5c0-7 8-7 8 0"/><path fill="none" stroke="currentColor" stroke-width="2" d="M-4 -1c1 5 7 5 8 0"/>',
burger: '<path d="M-10 -2c0-9 20-9 20 0zM-10 0H10V3H-10zM-10 5H10c0 5-4 5-6 5h-8c-2 0-6 0-6-5z"/>',
cup: '<path d="M-9 -9H7V-6c6-2 6 7-1 7-1 4-4 5-7 5-5 0-8-3-8-8zM-9 8H8V11H-9z"/>',
bed: '<path d="M-12 -9h3V2H12V8H9V5H-9V8h-3zM-2 -5H7c4 0 5 2 5 5H-2z"/><circle cx="-5" cy="-3" r="3"/>',
print: '<path d="M-7 -10H7V-5H-7zM-12 -4H12V6H7V2H-7V6h-5zM-6 4H6V11H-6z"/>',
work: '<path d="M-12 -5h7v-4H5v4h7v6H-12zM-12 3H-3V5H3V3h9v6H-12z"/>',
cap: '<path d="M-13 -3L1 -10 13 -5 1 3zM-8 3l9 5 8-6v7c-5 4-12 4-17 0z"/>',
flag: '<path d="M-9 -10h3V11h-3zM-5 -9c5-3 8 3 15 0V3C3 6 0 0-5 3z"/>',
star: '<path d="M0 -12l3 8h9l-7 6 3 9-8-6-8 6 3-9-7-6h9z"/>',
plus: '<path d="M-3 -10H3V-3H10V3H3V10H-3V3H-10V-3H-3z"/>',
tooth: '<path d="M-8 -7c2-5 6-2 8-2s6-3 8 2c1 6-2 8-3 17-3 2-3-8-5-8s-2 10-5 8c-1-9-4-11-3-17z"/>',
bank: '<path d="M-12 -5L0 -11 12 -5V-2H-12zM-9 -1H9V8H12V11H-12V8h3z"/><path fill="none" stroke="currentColor" stroke-width="2" d="M-1 8V0H2c3 0 3 4 0 4H-3"/>',
basket: '<path d="M-13 -3H13V1H11L8 11H-8L-11 1h-2z"/><path fill="none" stroke="#fff" stroke-width="2" d="M-8 -3l3-8M8 -3l-3-8"/><path stroke="currentColor" stroke-width="2" d="M-4 2v6M0 2v6M4 2v6"/>',
dot: '<circle r="8"/>', flame: '<path d="M3 -12c-2 8-9 10-9 17 0 6 12 6 12 0 0-5-5-9-3-17z"/><path d="M-9 10H9v2H-9z"/>',
david: '<path fill="none" stroke="#fff" stroke-width="3" d="M0 -11L9 5H-9zM0 11L9 -5H-9z"/>' };
const O = '#ff9c56', P = '#9b83fb', G = '#9da2a6', T = '#62c3ac', S = '#57a6f4';
for (const [s, u, v, c, k, pin] of [['A',291,299,S,'bag',1],['A',502,245,O,'burger',1],['A',1164,142,'#82c653','plus'],['B',55,60,O,'burger'],['A',765,540,O,'cup'],['A',1387,680,P,'bed'],['A',436,962,P,'bed'],['A',889,935,P,'print',1],['A',643,1212,P,'work',1],['A',901,1243,G,'cap'],['A',1231,1411,G,'flag'],['A',180,1535,P,'dot',1],['A',1540,1460,P,'dot',1],['B',279,747,'#fb8b90','tooth'],['B',1168,799,G,'flag'],['B',436,1235,P,'bank'],['B',795,1132,P,'work',1],['B',1555,1440,S,'dot'],['D',692,140,G,'cap'],['C',1125,238,G,'flame'],['D',206,370,T,'star'],['D',814,433,S,'basket'],['C',267,460,S,'basket'],['C',664,549,P,'bed'],['C',971,733,T,'star'],['D',37,830,T,'star'],['C',468,1018,S,'basket'],['C',256,1025,S,'bag'],['C',1132,1250,S,'bag'],['C',493,1492,P,'bank'],['D',647,943,T,'star'],['D',815,1187,T,'star'],['D',85,1150,G,'david'],['D',704,1393,G,'cap'],['D',1137,1417,T,'star'],['D',1429,630,P,'dot']]) {
  const [x, y] = at(s, u, v); out += `<g transform="translate(${x} ${y})" color="${c}" fill="#fff">` + (pin ? `<path fill="${c}" d="M-24 0a24 24 0 1 1 48 0c0 12-8 18-15 23C4 27 2 30 0 36-2 30-4 27-9 23-16 18-24 12-24 0z"/>` : `<circle r="20" fill="${c}"/>`) + icon[k] + '</g>'; }
for (const [s, u, v] of [['A',1305,200],['A',1418,291],['A',38,701],['B',844,10],['B',488,331],['B',439,1318],['C',483,475],['C',518,776],['C',245,899],['D',439,106],['D',484,339],['D',722,320],['D',998,354],['D',1290,47],['D',940,671]]) {
  const [x, y] = at(s, u, v); out += `<g transform="translate(${x} ${y})"><rect x="-13" y="-13" width="26" height="26" rx="6" fill="#fff"/><rect x="-11" y="-11" width="22" height="22" rx="4" fill="#2e72e8"/><path fill="none" stroke="#fff" stroke-width="2" d="M-6 -5H9M-6 -1H-1M-7 3H-1V-5M3 -5V6M7 -5V6M1 6H9"/><circle cx="-6" cy="7" r="2" fill="#fff"/></g>`; }
for (const [s, u, v] of [['C',1520,1095],['D',920,222]]) { const [x, y] = at(s, u, v); out += `<g transform="translate(${x} ${y})"><rect x="-6" y="-13" width="12" height="26" rx="3" fill="#555"/><circle cy="-8" r="3" fill="#f55"/><circle r="3" fill="#fc3"/><circle cy="8" r="3" fill="#5c4"/></g>`; }
{ const [x, y] = at('B', 567, 233); out += `<path transform="translate(${x} ${y})" fill="#8d8986" d="M-9 14V9H-5V-7L0 -14 5 -7V9H9V14z"/>`; }

// place names
const names = [
['A',300,390,S,'ксклюзив Эрна'],['A',502,334,'#ef7d2b','Макдоналдс'],['A',1164,208,'#64a83a','Ригла'],['B',55,125,'#ef7d2b','KFC'],['A',765,607,'#ef7d2b','Сметана'],['A',1385,744,P,'Прованс'],['A',436,1026,P,'Парк Сити Rose'],['A',889,1028,P,'Типография'],['A',889,1073,P,'Блок-нот'],['A',899,1311,'#8b9095','Школа № 39'],['A',1232,1476,'#8b9095','Администрация'],['A',1232,1521,'#8b9095','Кировского'],['C',1232,0,'#8b9095','района'],['C',180,58,P,'ПК'],['C',204,103,P,'ройЮгКомплект'],['A',1540,1550,P,'Символъ'],['B',278,813,'#f0646b','Demokrat'],['B',1168,866,'#8b9095','Правительство'],['B',1168,911,'#8b9095','области'],['B',261,1234,P,'Альфа-Банк'],['B',785,229,'#8b9095','Памятник храму'],['B',1500,818,'#ef7d2b','Горо'],['B',1490,1531,S,'Велоп'],['D',692,205,'#8b9095','Гимназия № 45'],['C',1122,300,'#8b9095','ГИПРОДОРНИИ,'],['C',1125,345,'#8b9095','филиал'],['D',204,433,'#36a488','Особняк'],['D',204,481,'#36a488','конца XIX в.'],['D',811,504,S,'Магнит'],['C',260,530,S,'Магнит'],['C',664,611,P,'Orange'],['C',972,800,'#36a488','Доходный дом'],['C',972,845,'#36a488','А.И. Келле-'],['C',972,889,'#36a488','Шагинова'],['D',35,893,'#36a488','Дом И.Д.'],['D',35,938,'#36a488','Хацмана'],['C',641,1018,S,'Апекс плюс'],['C',256,1090,S,'Максимовъ'],['C',1130,1312,S,'Красное&amp;Белое'],['D',645,1011,'#36a488','Духовное'],['D',645,1056,'#36a488','правление'],['D',645,1101,'#36a488','синагоги'],['D',952,1143,'#36a488','Главная'],['D',977,1188,'#36a488','хоральная'],['D',961,1233,'#36a488','синагога'],['D',85,1216,'#8b9095','Синагога'],['D',706,1460,'#8b9095','Гимназия'],['D',706,1505,'#8b9095','ОР Авнер'],['D',1140,1524,'#36a488','Е.П. Ляхмаер'],['D',1430,693,P,'Картонажная'],['D',1427,740,P,'фабрика'],['D',1525,1298,S,'Вел']];
out += '<g font-family="Open Sans, sans-serif" font-weight="600" font-size="20" text-anchor="middle" stroke="#fff" stroke-width="3" stroke-opacity=".7" paint-order="stroke">' + names.map(([s, u, v, c, t]) => { const [x, y] = at(s, u, v); return `<text x="${x}" y="${y + 7}" fill="${c}"${t.includes('XIX') ? ' font-style="italic"' : ''}>${t}</text>`; }).join('') + '</g>';

// street names
out += '<g font-family="Open Sans, sans-serif" fill="#4a4a4a" text-anchor="middle" stroke="#fff" stroke-width="3" stroke-opacity=".7" paint-order="stroke">';
for (const [x, y, r, f, t] of [[1376,757,-16,29,'Большая Садовая ул.'],[1957,599,-17,29,'Большая Садовая ул.'],[1596,896,-16,24,'ул. Шаумяна'],[1585,1171,73,24,'Газетный пер.'],[1369,1265,-17,24,'ул. Серафимовича'],[1477,1383,-16,24,'Темерницкая ул.'],[1740,1613,-16,24,'ул. Станиславского'],[2484,1380,-16,24,'ул. Станиславского'],[2154,1181,73,31,'Ворошиловский просп.'],[2000,1690,-16,24,'ул. Обороны'],[1903,2017,-16,24,'ул. Баумана'],[1399,2023,-15,24,'Тургеневская ул.']]) out += `<text transform="translate(${x} ${y}) rotate(${r})" y="8" font-size="${f}">${t}</text>`;
out += '</g>';

// office marker
out += '<path fill="#000" fill-opacity=".3" d="M1830 1332l26-46 12-8c-2 24-20 42-38 54z"/><path fill="#0d7fd8" d="M1827 1332c5-12 7-18 4-27a26 26 0 1 1 27-10c-6 12-21 29-31 37z"/><circle cx="1836" cy="1279" r="20" fill="#fff"/>';
document.getElementById('map').innerHTML = out;
</script>
</body>
</html>
